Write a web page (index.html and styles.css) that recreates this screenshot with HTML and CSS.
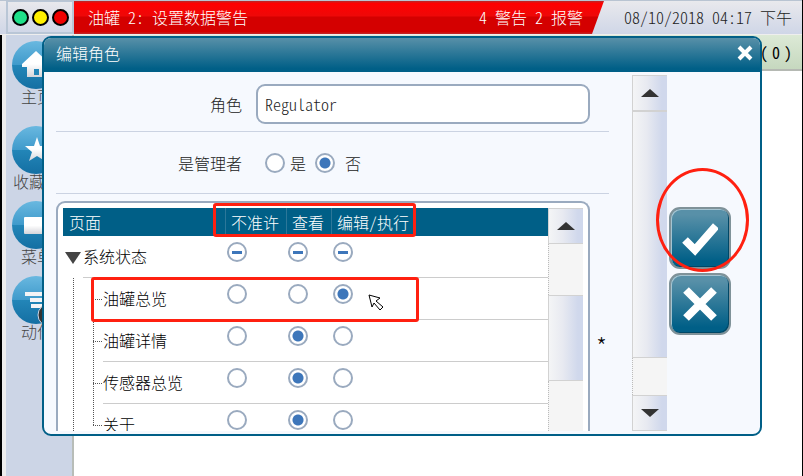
FILE: index.html
```html
<!DOCTYPE html>
<html lang="zh-CN">
<head>
  <meta charset="UTF-8" />
  <meta name="viewport" content="width=device-width, initial-scale=1" />
  <title>编辑角色</title>
  <link rel="stylesheet" href="styles.css">
</head>
<body>

  <!-- Status bar -->
  <header class="topbar">
    <div class="lights">
      <span class="light green"></span>
      <span class="light yellow"></span>
      <span class="light red"></span>
    </div>
    <div class="alarm">
      <span>油罐 2: 设置数据警告</span>
      <span>4 警告 2 报警</span>
    </div>
    <time class="clock">08/10/2018 04:17 下午</time>
  </header>

  <div class="page">
    <nav class="sidebar">
      <a href="#" class="nav-home">
        <svg class="nav-icon" viewBox="0 0 48 48">
          <defs>
            <linearGradient id="disc" x1="0" y1="0" x2="0" y2="1">
              <stop offset="0" stop-color="#69b8e0" />
              <stop offset=".5" stop-color="#3f9acb" />
              <stop offset=".5" stop-color="#2386b8" />
              <stop offset="1" stop-color="#146fa3" />
            </linearGradient>
            <linearGradient id="shade" x1="0" y1="0" x2="0" y2="1">
              <stop offset=".5" stop-color="#fff" />
              <stop offset="1" stop-color="#d5d5da" />
            </linearGradient>
          </defs>
          <circle cx="24" cy="24" r="24" fill="url(#disc)" />
          <path d="M24 10L38 23V26H35V36H15V26H10V23Z" fill="url(#shade)" />
          <path d="M22 28h5v6h-5z" fill="#2386b8" />
        </svg>
        <span>主页</span>
      </a>
      <a href="#">
        <svg class="nav-icon" viewBox="0 0 48 48">
          <circle cx="24" cy="24" r="24" fill="url(#disc)" />
          <path d="M25 11L28 20H37L30 26L33 35L25 30L17 35L20 26L13 20H22Z" fill="url(#shade)" />
        </svg>
        <span>收藏夹</span>
      </a>
      <a href="#">
        <svg class="nav-icon" viewBox="0 0 48 48">
          <circle cx="24" cy="24" r="24" fill="url(#disc)" />
          <rect x="12" y="16" width="24" height="17" rx="1" fill="url(#shade)" />
        </svg>
        <span>菜单</span>
      </a>
      <a href="#">
        <svg class="nav-icon" viewBox="0 0 48 48">
          <circle cx="24" cy="24" r="24" fill="url(#disc)" />
          <path d="M13 16h22v4H13zM18 22h17v4H18zM19 28h16v4H19z" fill="#f4f4f6" />
          <circle cx="37" cy="39" r="11" fill="#333" stroke="#ccd5e6" />
        </svg>
        <span>动作</span>
      </a>
    </nav>
    <main class="content">
      <div class="banner"><span>(</span><span>0</span><span>)</span></div>
    </main>
  </div>

  <!-- Edit role dialog -->
  <form class="dialog" role="dialog" aria-labelledby="dialog-title">
    <div class="dialog-title">
      <h1 id="dialog-title">编辑角色</h1>
      <button type="button" class="close" aria-label="关闭">
        <svg viewBox="0 0 16 16"><path d="M2 2L14 14M14 2L2 14" stroke="#fff" stroke-width="4" /></svg>
      </button>
    </div>

    <div class="dialog-body">
      <div class="fields">
        <div class="field">
          <label class="caption" for="role">角色</label>
          <input type="text" id="role" class="text" value="Regulator">
        </div>
        <div class="field" role="radiogroup" aria-labelledby="admin">
          <span class="caption" id="admin">是管理者</span>
          <input type="radio" name="admin" id="admin-yes">
          <label class="option-yes" for="admin-yes">是</label>
          <input type="radio" name="admin" id="admin-no" checked>
          <label class="option-no" for="admin-no">否</label>
        </div>

        <div class="access-row">
          <div class="access">
            <table>
              <thead>
                <tr>
                  <th class="col-page">页面</th>
                  <th class="col-none">不准许</th>
                  <th class="col-view">查看</th>
                  <th>编辑/执行</th>
                </tr>
              </thead>
              <tbody>
                <tr class="group">
                  <td><span class="expander"></span>系统状态</td>
                  <td><input type="radio" class="partial" name="all" aria-label="系统状态 不准许"></td>
                  <td><input type="radio" class="partial" name="all" aria-label="系统状态 查看"></td>
                  <td><input type="radio" class="partial" name="all" aria-label="系统状态 编辑/执行"></td>
                </tr>
                <tr>
                  <td>油罐总览</td>
                  <td><input type="radio" name="tank" aria-label="油罐总览 不准许"></td>
                  <td><input type="radio" name="tank" aria-label="油罐总览 查看"></td>
                  <td><input type="radio" name="tank" aria-label="油罐总览 编辑/执行" checked></td>
                </tr>
                <tr>
                  <td>油罐详情</td>
                  <td><input type="radio" name="detail" aria-label="油罐详情 不准许"></td>
                  <td><input type="radio" name="detail" aria-label="油罐详情 查看" checked></td>
                  <td><input type="radio" name="detail" aria-label="油罐详情 编辑/执行"></td>
                </tr>
                <tr>
                  <td>传感器总览</td>
                  <td><input type="radio" name="sensor" aria-label="传感器总览 不准许"></td>
                  <td><input type="radio" name="sensor" aria-label="传感器总览 查看" checked></td>
                  <td><input type="radio" name="sensor" aria-label="传感器总览 编辑/执行"></td>
                </tr>
                <tr class="last">
                  <td>关于</td>
                  <td><input type="radio" name="about" aria-label="关于 不准许"></td>
                  <td><input type="radio" name="about" aria-label="关于 查看" checked></td>
                  <td><input type="radio" name="about" aria-label="关于 编辑/执行"></td>
                </tr>
              </tbody>
            </table>
            <div class="scrollbar list-scroll">
              <button type="button" class="arrow" aria-label="向上"><span class="up"></span></button>
              <div class="track before"></div>
              <div class="thumb"></div>
              <div class="track after"></div>
            </div>
            <div class="mark mark-head"></div>
            <div class="mark mark-row"></div>
            <svg class="pointer" viewBox="0 0 16 17">
              <path d="M1 1L12 4L8 7L15 13L12 16L6 9L4 13Z" fill="#fff" stroke="#000" />
            </svg>
          </div>
          <span class="required">*</span>
        </div>
      </div>

      <div class="scrollbar form-scroll">
        <button type="button" class="arrow" aria-label="向上"><span class="up"></span></button>
        <div class="thumb"></div>
        <div class="track after"></div>
        <button type="button" class="arrow" aria-label="向下"><span class="down"></span></button>
      </div>

      <div class="actions">
        <button type="submit" class="action" aria-label="确定">
          <svg viewBox="0 0 36 36"><path d="M3 20L13 30L34 6" fill="none" stroke="#fff" stroke-width="8" /></svg>
        </button>
        <button type="button" class="action" aria-label="取消">
          <svg viewBox="0 0 36 36"><path d="M4 4L32 32M32 4L4 32" stroke="#fff" stroke-width="8" /></svg>
        </button>
        <div class="mark mark-confirm"></div>
      </div>
    </div>
  </form>

</body>
</html>
```
FILE: styles.css
```css
* {
  box-sizing: border-box;
}

body {
  display: flex;
  flex-direction: column;
  height: 100vh;
  margin: 0;
  overflow: hidden;
  position: relative;
  border-right: 1px solid #000;
  font-family: "Noto Sans CJK SC", sans-serif;
  font-feature-settings: "hwid";
  font-size: 16px;
  font-weight: 300;
  line-height: 20px;
  color: #222;
  background: #fff;
}

button {
  padding: 0;
  border: none;
  cursor: pointer;
}

/* Status bar */
.topbar {
  display: flex;
  height: 35px;
  padding-left: 6px;
  background: linear-gradient(#e9e9ed, #cfd6e7);
  border-top: 1px solid #b9c4d2;
  border-bottom: 1px solid #eee;
}

.lights {
  display: flex;
  align-items: center;
  justify-content: center;
  gap: 3px;
  width: 68px;
  border: 2px solid #b9c6d6;
  border-top-width: 1px;
}

.light {
  width: 17px;
  height: 17px;
  border: 2px solid #000;
  border-radius: 50%;
}

.green {
  background: #1fe08a;
}

.yellow {
  background: #fff000;
}

.red {
  background: #f00000;
}

.alarm {
  flex: 1;
  display: flex;
  align-items: center;
  justify-content: space-between;
  padding: 0 21px 2px 14px;
  color: #fff;
  background: linear-gradient(#c62020 0 1px, #ff0000 2px, #ee0808 15px, #d40000 16px, #d40000 31px, #c62020 32px);
  clip-path: polygon(0 0, 100% 0, calc(100% - 12px) 100%, 0 100%);
}

.clock {
  display: flex;
  align-items: center;
  padding: 0 10px 2px 20px;
}

/* Page behind the dialog */
.page {
  flex: 1;
  display: flex;
  border-left: 2px solid #000;
}

.sidebar {
  width: 72px;
  padding: 6px 0 0 6px;
  background: #ccd5e6;
  border-left: 4px solid #ededed;
  border-right: 2px solid #b8bdb8;
}

.sidebar a {
  display: flex;
  flex-direction: column;
  align-items: center;
  width: 50px;
  height: 75px;
  color: #444;
  text-decoration: none;
  white-space: nowrap;
}

.sidebar .nav-home {
  height: 85px;
}

.nav-icon {
  flex: none;
  align-self: flex-start;
  width: 48px;
  height: 48px;
  margin-bottom: -3px;
}

.content {
  flex: 1;
}

.banner {
  display: flex;
  justify-content: flex-end;
  gap: 4px;
  height: 36px;
  padding: 7px 10px;
  color: #000;
  font-weight: 400;
  background: linear-gradient(#dce9d6, #c6d8bf);
  border-bottom: 2px solid #b5b9b3;
}

/* Dialog */
.dialog {
  position: absolute;
  top: 36px;
  right: 40px;
  bottom: 40px;
  left: 42px;
  display: flex;
  flex-direction: column;
  overflow: hidden;
  background: #f6f9fe;
  border: 2px solid #005f87;
  border-radius: 9px;
}

.dialog-title {
  flex: none;
  display: flex;
  align-items: center;
  justify-content: space-between;
  height: 34px;
  padding: 0 7px 5px 12px;
  background: linear-gradient(#5890a8, #005f87 90%);
}

.dialog-title h1 {
  margin: 0;
  font-size: 16px;
  font-weight: 300;
  color: #fff;
}

.close {
  width: 16px;
  height: 16px;
  background: none;
}

.close svg {
  display: block;
}

.dialog-body {
  flex: 1;
  display: flex;
  min-height: 0;
  padding: 3px 29px 3px 12px;
}

.fields {
  flex: 1;
  display: flex;
  flex-direction: column;
  margin-right: 23px;
}

.field {
  flex: none;
  display: flex;
  align-items: center;
  height: 62px;
  padding-right: 19px;
  border-bottom: 1px solid #cbd3e2;
}

.field:first-child {
  height: 57px;
  padding-top: 2px;
}

.caption {
  width: 186px;
  margin-right: 14px;
  text-align: right;
}

.text {
  flex: 1;
  height: 40px;
  padding: 0 7px;
  font: inherit;
  font-feature-settings: inherit;
  color: #222;
  background: #fff;
  border: 2px solid #9aaabf;
  border-radius: 9px;
}

input[type="radio"] {
  appearance: none;
  display: block;
  width: 20px;
  height: 20px;
  margin: 0;
  background: #fff;
  border: 2px solid #9aaabf;
  border-radius: 50%;
}

input[type="radio"]:checked {
  background: radial-gradient(circle, #3d76ba 5px, #fff 6px);
}

input.partial[type="radio"] {
  background: linear-gradient(#3d76ba, #3d76ba) center / 10px 3px no-repeat #fff;
}

#admin-yes {
  margin-left: 9px;
}

.option-yes {
  margin: 0 9px 0 5px;
}

.option-no {
  margin-left: 10px;
}

.access-row {
  flex: 1;
  display: flex;
  min-height: 0;
  padding-top: 7px;
}

.access {
  position: relative;
  flex: 1;
  display: flex;
  align-items: flex-start;
  overflow: hidden;
  padding: 5px 5px 0;
  background: #fff;
  border: 2px solid #9aaabf;
  border-bottom: none;
  border-radius: 9px 9px 0 0;
}

.required {
  width: 19px;
  padding: 135px 0 0 4px;
  text-align: center;
  font-size: 24px;
  color: #000;
}

/* Permission table */
table {
  flex: 1;
  table-layout: fixed;
  border-collapse: separate;
  border-spacing: 0;
  color: #000;
}

th {
  height: 28px;
  padding: 0 0 1px 6px;
  font-weight: 300;
  text-align: left;
  color: #fff;
  background: #005f87;
}

th + th {
  padding-left: 5px;
  border-left: 1px solid #2c7799;
}

.col-page {
  width: 162px;
}

.col-none {
  width: 61px;
}

.col-view {
  width: 45px;
}

td {
  position: relative;
  height: 42px;
  padding: 6px 0 0 2px;
  vertical-align: top;
  border-bottom: 1px solid #ccc;
}

td:first-child {
  padding: 10px 0 0 40px;
  border-bottom: none;
}

.group td:first-child {
  padding-left: 20px;
}

/* row line starts under the text, not under the tree */
td:first-child::after {
  content: "";
  position: absolute;
  right: 0;
  bottom: 0;
  left: 40px;
  border-bottom: 1px solid #ccc;
}

.group td:first-child::after {
  left: 20px;
}

tr:not(.group) td:first-child {
  background:
    repeating-linear-gradient(#555 0 1px, transparent 1px 2px) 10px 0 / 1px 100% no-repeat,
    repeating-linear-gradient(#555 0 1px, transparent 1px 2px) 30px 0 / 1px 100% no-repeat,
    repeating-linear-gradient(90deg, #555 0 1px, transparent 1px 2px) 30px 21px / 10px 1px no-repeat;
}

tr.last td:first-child {
  background-size: 1px 100%, 1px 21px, 10px 1px;
}

.expander {
  position: absolute;
  top: 16px;
  left: 2px;
  border: 8px solid transparent;
  border-top: 12px solid #444;
  border-bottom: none;
}

/* Scrollbars */
.scrollbar {
  flex: none;
  display: flex;
  flex-direction: column;
  width: 35px;
}

.list-scroll {
  align-self: stretch;
}

.arrow,
.thumb {
  background: linear-gradient(90deg, #f4f5f6, #e8eaf1 40%, #d0d8ec 85%);
  border: 1px solid #d2d2d2;
  border-right: none;
}

.arrow {
  flex: none;
  display: flex;
  align-items: center;
  justify-content: center;
  height: 36px;
}

.up,
.down {
  border: 9px solid transparent;
}

.up {
  border-top: none;
  border-bottom: 8px solid #333;
}

.down {
  border-top: 8px solid #333;
  border-bottom: none;
}

.track {
  background: #f5f5f5;
  border-left: 1px dotted #bbb;
}

.thumb {
  flex: 84;
}

.before {
  flex: 52;
}

.after {
  flex: 51;
}

.form-scroll .thumb {
  flex: 247;
}

.form-scroll .after {
  flex: 37;
}

/* Confirm and cancel */
.actions {
  position: relative;
  display: flex;
  flex-direction: column;
  gap: 4px;
  padding: 132px 0 0 2px;
}

.action {
  display: flex;
  align-items: center;
  justify-content: center;
  width: 62px;
  height: 62px;
  background: linear-gradient(#5890a8 10%, #005f87 90%);
  border: 2px solid #7f9299;
  border-radius: 11px;
  box-shadow: inset 1px 1px 0 #a5c4d1, inset -1px -1px 0 #004766;
}

.action svg {
  width: 36px;
  height: 36px;
}

/* Red call-outs */
.mark {
  position: absolute;
  border: 3px solid #ff2010;
  border-radius: 3px;
  pointer-events: none;
}

.mark-head {
  top: 0;
  left: 155px;
  width: 203px;
  height: 34px;
}

.mark-row {
  top: 74px;
  left: 33px;
  width: 328px;
  height: 45px;
}

.mark-confirm {
  top: 93px;
  left: -11px;
  width: 93px;
  height: 104px;
  border-radius: 50%;
}

.pointer {
  position: absolute;
  top: 91px;
  left: 310px;
  width: 16px;
  height: 17px;
}
```
